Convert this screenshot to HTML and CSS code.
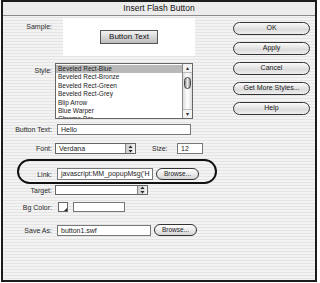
FILE: index.html
```html
<!DOCTYPE html>
<html>
<head>
<meta charset="utf-8">
<link rel="stylesheet" href="styles.css">
</head>
<body>
<div class="window">
  <div class="titlebar">Insert Flash Button</div>
  <div class="main">
    <div class="form">
      <div class="row r-sample">
        <div class="label lab-top">Sample:</div>
        <div class="sample"><div class="sample-btn">Button Text</div></div>
      </div>
      <div class="row r-style">
        <div class="label lab-top">Style:</div>
        <div class="listbox">
          <div class="items">
            <div class="item sel">Beveled Rect-Blue</div>
            <div class="item">Beveled Rect-Bronze</div>
            <div class="item">Beveled Rect-Green</div>
            <div class="item">Beveled Rect-Grey</div>
            <div class="item">Blip Arrow</div>
            <div class="item">Blue Warper</div>
            <div class="item">Chrome Bar</div>
          </div>
          <div class="scroll">
            <div class="arr">&#9652;</div>
            <div class="track"><div class="thumb"></div></div>
            <div class="arr">&#9662;</div>
          </div>
        </div>
      </div>
      <div class="row r-btext">
        <div class="label">Button Text:</div>
        <div class="input w-btext">Hello</div>
      </div>
      <div class="row r-font">
        <div class="label">Font:</div>
        <div class="select w-font"><span class="sv">Verdana</span><span class="step"><svg width="5" height="8" viewBox="0 0 5 8"><path d="M2.5 0.5 L4.5 3 H0.5 Z M2.5 7.5 L4.5 5 H0.5 Z" fill="#222"/></svg></span></div>
        <div class="size-label">Size:</div>
        <div class="input w-size">12</div>
      </div>
      <div class="row r-link">
        <div class="label">Link:</div>
        <div class="input w-link">javascript:MM_popupMsg('H</div>
        <div class="browse">Browse...</div>
      </div>
      <div class="row r-target">
        <div class="label">Target:</div>
        <div class="select w-target"><span class="sv"></span><span class="step"><svg width="5" height="8" viewBox="0 0 5 8"><path d="M2.5 0.5 L4.5 3 H0.5 Z M2.5 7.5 L4.5 5 H0.5 Z" fill="#222"/></svg></span></div>
      </div>
      <div class="row r-bg">
        <div class="label">Bg Color:</div>
        <div class="swatch"><span class="tri"></span></div>
        <div class="input w-bg"></div>
      </div>
      <div class="row r-save">
        <div class="label">Save As:</div>
        <div class="input w-save">button1.swf</div>
        <div class="browse">Browse...</div>
      </div>
      <div class="oval"></div>
    </div>
    <div class="actions">
      <div class="pill">OK</div>
      <div class="pill">Apply</div>
      <div class="pill">Cancel</div>
      <div class="pill">Get More Styles...</div>
      <div class="pill">Help</div>
    </div>
  </div>
</div>
</body>
</html>
```
FILE: styles.css
```css
* { box-sizing: border-box; }
html, body { margin: 0; padding: 0; background: #fff; }
body { font-family: "Liberation Sans", Arial, sans-serif; color: #222; }
.window {
  margin-left: 1px;
  width: 316px;
  height: 282px;
  border: 2px solid #1c1c1c;
  background: repeating-linear-gradient(#e4e4e4 0 1px, #f3f3f3 1px 3px);
  display: flex;
  flex-direction: column;
}
.titlebar {
  height: 14px;
  background: #ececec;
  border-bottom: 1px solid #8a8a8a;
  text-align: center;
  font-size: 8.5px;
  line-height: 13px;
  color: #111;
}
.main { display: flex; flex: 1; }
.form { position: relative; width: 218px; }
.row { display: flex; align-items: center; }
.label {
  width: 49px;
  margin-right: 4px;
  text-align: right;
  font-size: 7px;
  color: #2a2a2a;
  flex: none;
}
.r-sample { margin-top: 2px; height: 38px; }
.r-sample .lab-top { align-self: flex-start; margin-top: 5px; }
.sample {
  margin-left: 7px;
  width: 132px;
  height: 38px;
  background: #fff;
  display: flex;
  align-items: center;
  justify-content: center;
}
.sample-btn {
  width: 58px;
  height: 14px;
  border: 1px solid #555;
  background: linear-gradient(#f2f2f2, #bdbdbd);
  font-size: 8px;
  line-height: 12px;
  text-align: center;
  color: #111;
}
.r-style { margin-top: 7px; height: 56px; align-items: flex-start; }
.r-style .lab-top { margin-top: 4px; }
.listbox {
  margin-left: -1px;
  width: 138px;
  height: 56px;
  border: 1px solid #666;
  background: #fff;
  display: flex;
  overflow: hidden;
}
.items { flex: 1; padding-top: 1px; }
.item { font-size: 6.5px; height: 8.4px; line-height: 8.4px; padding-left: 2px; color: #222; white-space: nowrap; }
.item.sel { background: #b9b9b9; }
.scroll {
  width: 10px;
  border-left: 1px solid #888;
  display: flex;
  flex-direction: column;
  background: #f2f2f2;
}
.arr { height: 8px; font-size: 6px; line-height: 8px; text-align: center; color: #333; }
.track {
  flex: 1;
  background: linear-gradient(90deg, #ddd, #fff 50%, #ddd);
  border-top: 1px solid #bbb;
  border-bottom: 1px solid #bbb;
  padding: 4px 1px 0;
}
.thumb {
  height: 12px;
  border: 1px solid #444;
  border-radius: 4px;
  background: linear-gradient(90deg, #888, #eee 50%, #888);
}
.input {
  height: 11px;
  border: 1px solid #777;
  background: #fff;
  font-size: 7px;
  line-height: 9px;
  padding-left: 3px;
  white-space: nowrap;
  overflow: hidden;
  color: #222;
}
.r-btext { margin-top: 5px; }
.w-btext { margin-left: 1px; width: 134px; }
.r-font { margin-top: 8px; }
.select {
  height: 11px;
  border: 1px solid #666;
  background: #fff;
  display: flex;
  font-size: 7px;
  margin-left: -1px;
}
.sv { flex: 1; padding-left: 3px; line-height: 9px; }
.step {
  width: 10px;
  border-left: 1px solid #888;
  background: linear-gradient(90deg, #ccc, #f4f4f4);
  display: flex;
  align-items: center;
  justify-content: center;
}
.w-font { width: 81px; }
.size-label { font-size: 7px; color: #2a2a2a; margin-left: 16px; width: 25px; }
.w-size { width: 26px; }
.r-link { margin-top: 14px; }
.w-link { margin-left: 1px; width: 96px; height: 12px; line-height: 10px; }
.browse {
  margin-left: 3px;
  width: 43px;
  height: 12px;
  border: 1px solid #333;
  border-radius: 6px;
  background: linear-gradient(#fff, #d6d6d6);
  font-size: 6.5px;
  line-height: 10px;
  text-align: center;
  color: #222;
}
.r-target { margin-top: 5px; }
.w-target { width: 93px; height: 10px; }
.w-target .sv { line-height: 8px; }
.r-bg { margin-top: 7px; }
.swatch {
  margin-left: 2px;
  width: 10px;
  height: 10px;
  border: 1px solid #666;
  background: #fff;
  position: relative;
}
.tri {
  position: absolute;
  right: 0; bottom: 0;
  width: 0; height: 0;
  border-left: 3px solid transparent;
  border-bottom: 3px solid #222;
}
.w-bg { margin-left: 5px; width: 52px; height: 10px; }
.r-save { margin-top: 12px; }
.w-save { margin-left: 1px; width: 94px; }
.oval {
  position: absolute;
  left: 14px;
  top: 143px;
  width: 200px;
  height: 25px;
  border: 2px solid #111;
  border-radius: 13px;
}
.actions {
  display: flex;
  flex-direction: column;
  gap: 7px;
  padding-top: 6px;
  margin-left: 12px;
}
.pill {
  width: 77px;
  height: 13px;
  border: 1.5px solid #333;
  border-radius: 7px;
  background: linear-gradient(#fafafa, #dcdcdc 60%, #eee);
  font-size: 7px;
  line-height: 10px;
  text-align: center;
  color: #1a1a1a;
}
```
